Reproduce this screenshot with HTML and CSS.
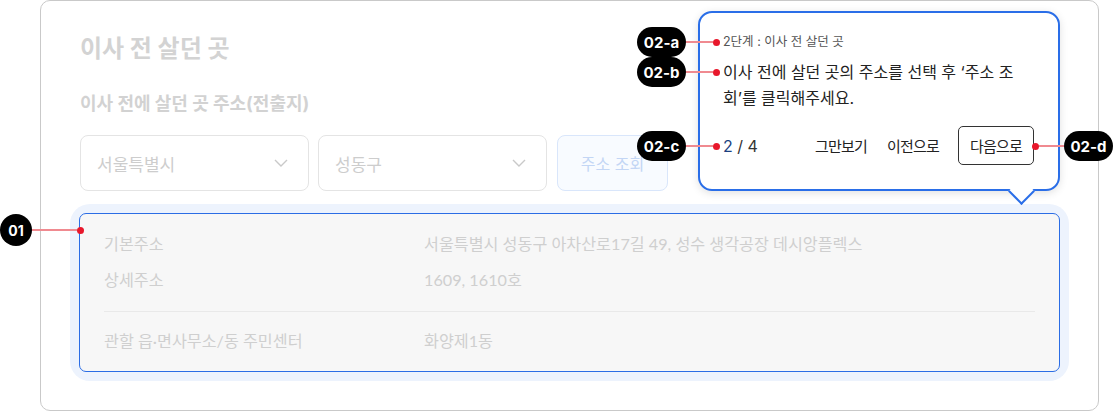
FILE: index.html
```html
<!DOCTYPE html>
<html lang="ko">
<head>
<meta charset="utf-8">
<title>이사 전 살던 곳</title>
<link rel="stylesheet" href="styles.css">
</head>
<body>
<div class="stage">
  <section class="card">
    <h1 class="title">이사 전 살던 곳</h1>
    <h2 class="label">이사 전에 살던 곳 주소(전출지)</h2>
    <div class="controls">
      <div class="select">
        <span>서울특별시</span>
        <svg class="chev" width="14" height="8" viewBox="0 0 14 8"><path d="M1 1l6 6 6-6" fill="none" stroke="#c9c9c9" stroke-width="1.4"/></svg>
      </div>
      <div class="select">
        <span>성동구</span>
        <svg class="chev" width="14" height="8" viewBox="0 0 14 8"><path d="M1 1l6 6 6-6" fill="none" stroke="#c9c9c9" stroke-width="1.4"/></svg>
      </div>
      <button class="search">주소 조회</button>
    </div>
    <div class="halo">
      <div class="info">
        <div class="row"><span class="k">기본주소</span><span class="v">서울특별시 성동구 아차산로17길 49, 성수 생각공장 데시앙플렉스</span></div>
        <div class="row"><span class="k">상세주소</span><span class="v">1609, 1610호</span></div>
        <div class="divider"></div>
        <div class="row"><span class="k">관할 읍·면사무소/동 주민센터</span><span class="v">화양제1동</span></div>
      </div>
    </div>
  </section>

  <div class="tip">
    <p class="tip-step">2단계 : 이사 전 살던 곳</p>
    <p class="tip-text">이사 전에 살던 곳의 주소를 선택 후 ‘주소 조<br>회’를 클릭해주세요.</p>
    <div class="tip-foot">
      <span class="count"><b>2</b> / 4</span>
      <div class="tip-actions">
        <button class="link">그만보기</button>
        <button class="link">이전으로</button>
        <button class="next">다음으로</button>
      </div>
    </div>
    <span class="arrow"></span>
  </div>

  <div class="anno anno-a"><span class="pill">02-a</span><span class="line"></span><span class="dot"></span></div>
  <div class="anno anno-b"><span class="pill">02-b</span><span class="line"></span><span class="dot"></span></div>
  <div class="anno anno-c"><span class="pill">02-c</span><span class="line"></span><span class="dot"></span></div>
  <div class="anno anno-d"><span class="dot"></span><span class="line"></span><span class="pill">02-d</span></div>
  <div class="anno anno-01"><span class="pill circle">01</span><span class="line"></span><span class="dot"></span></div>
</div>
</body>
</html>
```

FILE: styles.css
```css
* { box-sizing: border-box; }
html, body { margin: 0; padding: 0; background: #fff; }
body { font-family: "Inter", "Noto Sans CJK KR", sans-serif; }

.stage { position: relative; width: 1115px; height: 412px; overflow: hidden; }

.card {
  margin-left: 40px;
  width: 1059px;
  height: 411px;
  border: 1px solid #c9c9c9;
  border-radius: 10px;
  padding: 30px 39px 0 39px;
}
.title {
  margin: 0;
  font-size: 24px;
  line-height: 36px;
  font-weight: 700;
  color: #d3d3d3;
}
.label {
  margin: 25px 0 0;
  font-size: 18px;
  line-height: 24px;
  font-weight: 700;
  color: #d2d2d2;
}
.controls {
  margin-top: 19px;
  display: flex;
  gap: 9px;
  height: 56px;
}
.select {
  width: 229px;
  height: 56px;
  border: 1px solid #e4e4e4;
  border-radius: 8px;
  display: flex;
  align-items: center;
  justify-content: space-between;
  padding: 0 20px 0 16px;
  font-size: 17px;
  color: #cdcdcd;
}
.chev { display: block; }
.search {
  width: 111px;
  height: 56px;
  margin-left: 1px;
  border: 1px solid #d9e6fb;
  border-radius: 8px;
  background: #f8fbff;
  color: #c3d6f5;
  font-family: inherit;
  font-size: 16px;
  padding: 0;
}
.halo {
  margin: 13px -10px 0 -10px;
  padding: 9px;
  background: #edf3fd;
  border-radius: 20px;
}
.info {
  border: 1px solid #2b6de5;
  border-radius: 7px;
  background: #f7f7f7;
  padding: 19px 24px 19px;
  font-family: "Lato", "Noto Sans CJK KR", sans-serif;
  font-size: 16.2px;
  line-height: 22px;
  color: #cfcfcf;
}
.row { display: flex; }
.row + .row { margin-top: 14px; }
.k { width: 320px; flex: none; }
.divider { height: 1px; background: #e9e9e9; margin: 20px 0 18px; }

/* tooltip */
.tip {
  position: absolute;
  left: 698px;
  top: 11px;
  width: 362px;
  height: 180px;
  border: 2px solid #2a6ee8;
  border-radius: 14px;
  background: #fff;
  box-shadow: 0 2px 8px rgba(0, 0, 0, 0.12);
  padding: 20px 24px 24px 23px;
  color: #222;
}
.tip-step {
  margin: 0;
  font-size: 12.5px;
  line-height: 18px;
  color: #555;
}
.tip-text {
  margin: 8px 0 0;
  font-size: 16px;
  line-height: 26px;
  color: #222;
  white-space: nowrap;
}
.tip-foot {
  margin-top: 15px;
  display: flex;
  align-items: center;
  justify-content: space-between;
  height: 39px;
}
.count { font-size: 16px; color: #333; }
.count b { font-weight: 400; color: #1b3f80; }
.tip-actions { display: flex; align-items: center; gap: 20px; }
.tip-actions button {
  font-family: inherit;
  font-size: 15px;
  letter-spacing: -0.8px;
  color: #222;
  background: #fff;
  padding: 0;
  border: none;
}
.tip-actions .next {
  height: 39px;
  padding: 0 11px;
  border: 1px solid #333;
  border-radius: 5px;
  margin-left: -1px;
}
.arrow {
  position: absolute;
  left: 312px;
  top: 169px;
  width: 19px;
  height: 19px;
  background: #fff;
  border-right: 2px solid #2a6ee8;
  border-bottom: 2px solid #2a6ee8;
  transform: rotate(45deg);
}

/* annotations */
.anno { position: absolute; display: flex; align-items: center; height: 30px; }
.pill {
  height: 30px;
  width: 49px;
  border-radius: 15px;
  background: #000;
  color: #fff;
  font-family: "Inter", sans-serif;
  font-weight: 700;
  font-size: 15px;
  display: flex;
  align-items: center;
  justify-content: center;
}
.pill.circle { width: 32px; height: 32px; border-radius: 50%; font-size: 14px; }
.line { height: 2px; background: #f08a90; }
.dot { width: 7px; height: 7px; border-radius: 50%; background: #e8172b; flex: none; }

.anno-a { left: 637px; top: 27px; }
.anno-b { left: 637px; top: 57px; }
.anno-c { left: 637px; top: 131px; }
.anno-a .line, .anno-b .line, .anno-c .line { width: 27px; }
.anno-d { left: 1032px; top: 131px; }
.anno-d .line { width: 25px; }
.anno-01 { left: 0; top: 214px; height: 32px; }
.anno-01 .line { width: 45px; }
```
